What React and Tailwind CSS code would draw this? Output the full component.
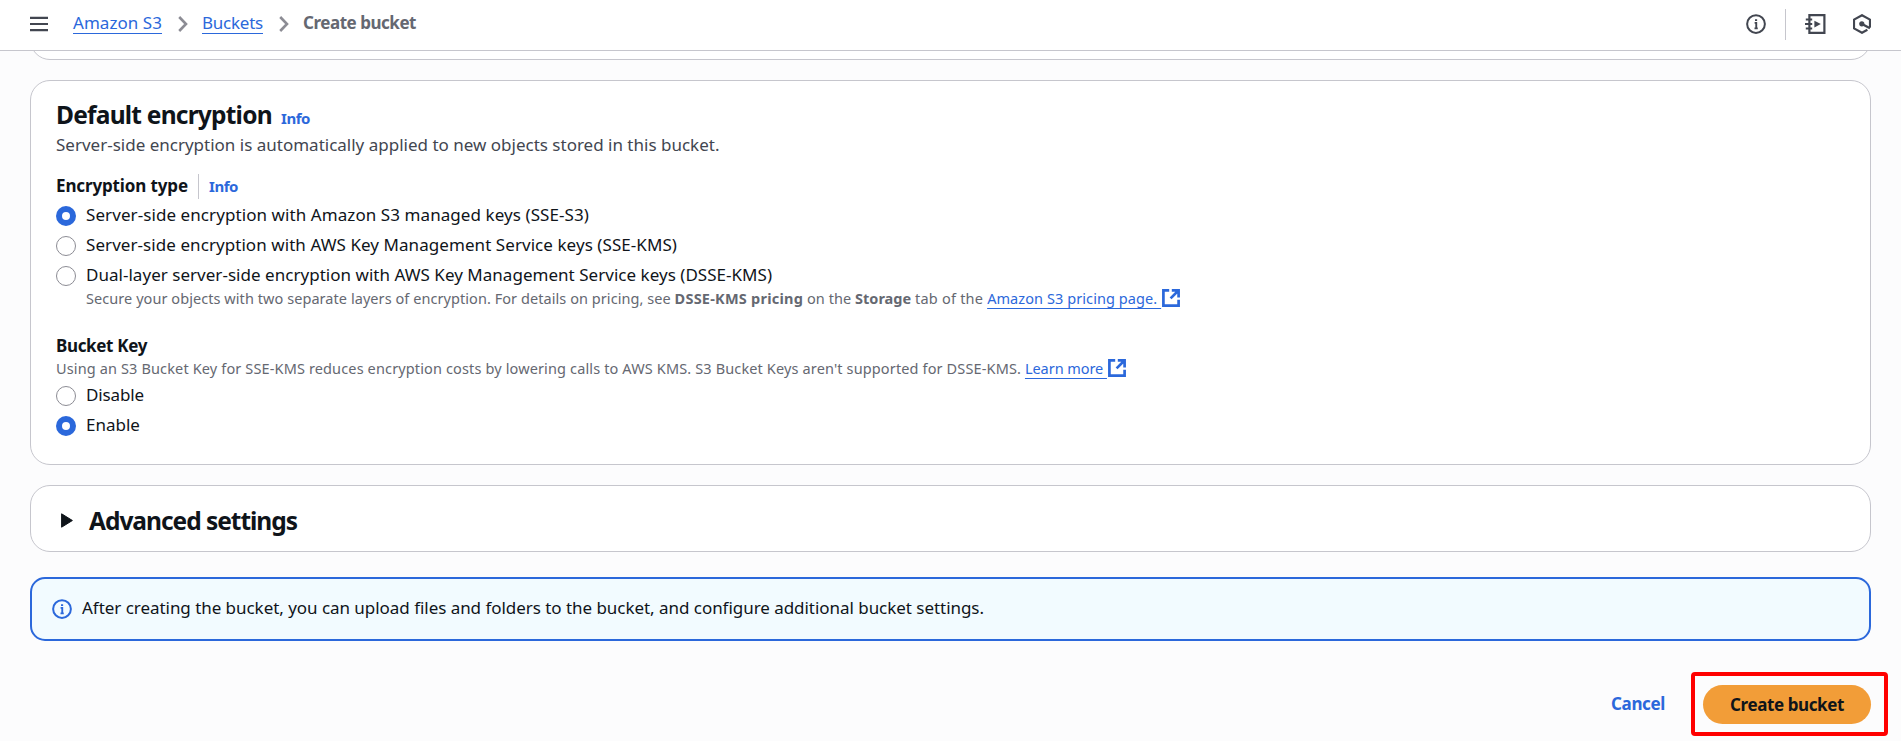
function InfoIcon({ className }) {
  return (
    <svg viewBox="0 0 16 16" className={className} fill="none" stroke="currentColor" strokeWidth="1.6">
      <circle cx="8" cy="8" r="7.1" />
      <path d="M8.2 11.9V7.1H6.9M6.8 11.5h2.6M7.2 4.9h1.7" strokeWidth="1.5" />
    </svg>
  );
}

function Chevron() {
  return (
    <svg viewBox="0 0 10 16" className="h-4 w-2.5 shrink-0 text-[#8c8c94]" fill="none" stroke="currentColor" strokeWidth="2.6">
      <path d="M1.2 1 8 8l-6.8 7" />
    </svg>
  );
}

function ExternalIcon() {
  return (
    <svg viewBox="0 0 18 18" className="ml-px h-[18px] w-[18px] shrink-0" fill="none" stroke="currentColor" strokeWidth="2.7">
      <path d="M7.2 1.4H1.4v15.2h15.2v-5.8M9.8 1.4h6.8v7M16.2 1.8 8.6 9.4" />
    </svg>
  );
}

function Radio({ checked, children, tracking }) {
  return (
    <label className="flex h-5 items-center gap-2.5">
      <span
        className={
          checked
            ? "h-5 w-5 shrink-0 rounded-full border-[6px] border-[#2b68db] bg-white"
            : "h-5 w-5 shrink-0 rounded-full border border-[#8c8c94] bg-white"
        }
      />
      <span className={"relative -top-px whitespace-nowrap leading-5 " + (tracking || "")}>{children}</span>
    </label>
  );
}

const link = "text-[#2b68db] underline decoration-1 underline-offset-4 [text-decoration-skip-ink:none]";
const small = "flex h-5 items-center whitespace-pre text-[14.5px] leading-5 text-[#656871]";

export default function App() {
  return (
    <div className="flex h-[741px] w-[1901px] flex-col overflow-hidden bg-[#fcfcfd] font-['Noto_Sans',sans-serif] text-[17px] text-[#0f141a]">
      <header className="z-10 flex h-[51px] shrink-0 items-center border-b border-[#c6c6cd] bg-white pr-[30px] pl-[30px] text-[#424650]">
        <svg viewBox="0 0 18 16" className="relative -top-px h-4 w-[18px]" stroke="currentColor" strokeWidth="2.2">
          <path d="M0 1.8h18M0 8h18M0 14.2h18" />
        </svg>
        <nav className="relative -top-[3px] ml-[25px] flex items-center whitespace-nowrap leading-[25px]">
          <a className={link + " w-[89px] tracking-[0.003em]"}>Amazon S3</a>
          <span className="relative top-[2px] mr-[14px] ml-4"><Chevron /></span>
          <a className={link + " w-[61px] tracking-[-0.014em]"}>Buckets</a>
          <span className="relative top-[2px] mr-[14px] ml-4"><Chevron /></span>
          <span className="font-bold tracking-[-0.0275em] text-[#656871]">Create bucket</span>
        </nav>
        <div className="relative -top-px ml-auto flex items-center">
          <InfoIcon className="h-5 w-5" />
          <span className="ml-[19px] h-[31px] w-px bg-[#c6c6cd]" />
          <svg viewBox="0 0 21 20" className="ml-[19px] h-5 w-[21px]" fill="none" stroke="currentColor" strokeWidth="2.2">
            <path d="M4.4 1.1h15v17.8h-15z" />
            <path d="M0.8 5.6h6.4M0 10h7.2M0.8 14.4h6.4" strokeWidth="2" />
            <path d="M9.4 6.8v6.6l6.4-3.3z" fill="currentColor" stroke="none" />
          </svg>
          <svg viewBox="0 0 18 20" className="ml-[27px] h-5 w-[18px]" fill="none" stroke="currentColor" strokeWidth="2.2">
            <path d="M17 13.4V5.6L9 1.2 1 5.6v8.8l8 4.4 5.4-3" />
            <path d="M9 10l8 4.2" strokeWidth="2.4" />
            <circle cx="8.8" cy="9.8" r="2.6" fill="currentColor" stroke="none" />
          </svg>
        </div>
      </header>

      <main className="flex flex-col pr-[30px] pl-[30px]">
        <div className="-mt-[31px] h-10 shrink-0 rounded-[20px] border border-[#c6c6cd] bg-white" />

        <section className="mt-5 h-[385px] shrink-0 rounded-[20px] border border-[#c6c6cd] bg-white pt-[18px] pl-[25px]">
          <div className="flex h-[31px] items-baseline whitespace-nowrap leading-[31px]">
            <h2 className="w-[225px] text-[24.5px] font-bold tracking-[-0.0315em]">Default encryption</h2>
            <a className="text-[15px] font-bold tracking-[-0.03em] text-[#2b68db]">Info</a>
          </div>
          <p className="mt-[2px] leading-[25px] text-[#424650]">
            Server-side encryption is automatically applied to new objects stored in this bucket.
          </p>

          <div className="mt-4 flex h-[25px] whitespace-nowrap leading-[25px]">
            <h3 className="w-[142px] font-bold tracking-[-0.0076em]">Encryption type</h3>
            <span className="relative top-px h-[25px] w-px bg-[#c6c6cd]" />
            <a className="relative top-px ml-2.5 text-[15px] font-bold tracking-[-0.03em] text-[#2b68db]">Info</a>
          </div>
          <div className="mt-2 flex flex-col gap-2.5">
            <Radio checked tracking="tracking-[0.0046em]">Server-side encryption with Amazon S3 managed keys (SSE-S3)</Radio>
            <Radio tracking="tracking-[0.0038em]">Server-side encryption with AWS Key Management Service keys (SSE-KMS)</Radio>
            <Radio tracking="tracking-[0.0017em]">Dual-layer server-side encryption with AWS Key Management Service keys (DSSE-KMS)</Radio>
          </div>
          <p className={small + " mt-0.5 pl-[30px]"}>
            <span className="tracking-[0.0042em]">{"Secure your objects with two separate layers of encryption. For details on pricing, see "}</span>
            <b className="tracking-[0.0159em]">DSSE-KMS pricing</b>
            <span className="tracking-[0.005em]">{" on the "}</span>
            <b>Storage</b>
            <span className="tracking-[0.0144em]">{" tab of the "}</span>
            <a className={link + " tracking-[0.0055em]"}>{"Amazon S3 pricing page. "}</a>
            <span className="text-[#2b68db]"><ExternalIcon /></span>
          </p>

          <h3 className="mt-[25px] font-bold leading-[25px] tracking-[-0.02em]">Bucket Key</h3>
          <p className={small}>
            <span className="tracking-[0.0094em]">{"Using an S3 Bucket Key for SSE-KMS reduces encryption costs by lowering calls to AWS KMS. S3 Bucket Keys aren't supported for DSSE-KMS. "}</span>
            <a className={link + " tracking-[-0.0038em]"}>{"Learn more "}</a>
            <span className="text-[#2b68db]"><ExternalIcon /></span>
          </p>
          <div className="mt-2 flex flex-col gap-2.5">
            <Radio tracking="tracking-[-0.0076em]">Disable</Radio>
            <Radio checked>Enable</Radio>
          </div>
        </section>

        <section className="mt-5 flex h-[67px] shrink-0 items-center rounded-[20px] border border-[#c6c6cd] bg-white pt-[3px] pl-[30px]">
          <svg viewBox="0 0 12 15" className="h-[15px] w-3 shrink-0" fill="currentColor" stroke="currentColor" strokeLinejoin="round">
            <path d="M.6.8v13.4L11.4 7.5z" />
          </svg>
          <h2 className="ml-4 text-[24.5px] font-bold leading-[31px] tracking-[-0.0417em]">Advanced settings</h2>
        </section>

        <div className="mt-[25px] flex h-16 shrink-0 items-center rounded-[15px] border-2 border-[#2b68db] bg-[#f2fbff] pl-5">
          <InfoIcon className="h-5 w-5 shrink-0 text-[#2b68db]" />
          <p className="relative -top-[2px] ml-2.5 leading-[25px] tracking-[-0.0024em]">
            After creating the bucket, you can upload files and folders to the bucket, and configure additional bucket settings.
          </p>
        </div>

        <div className="-mr-[17px] mt-[31px] flex h-16 shrink-0 items-center justify-end">
          <button className="mr-[26px] font-bold tracking-[-0.021em] text-[#2b68db]">Cancel</button>
          <div className="flex h-16 w-[197px] items-center rounded-[4px] border-4 border-[#ff0000] pl-2">
            <button className="h-[39px] w-[168px] rounded-full bg-[#f29d38] font-bold leading-[37px] tracking-[-0.023em]">Create bucket</button>
          </div>
        </div>
      </main>
    </div>
  );
}
